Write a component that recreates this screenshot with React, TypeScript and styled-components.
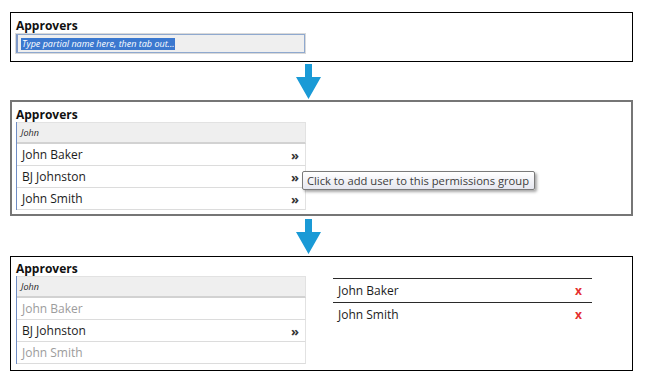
import React from 'react';
import styled, { createGlobalStyle } from 'styled-components';

const GlobalStyle = createGlobalStyle`
  body {
    margin: 0;
    background: #ffffff;
    font-family: "Open Sans", "Liberation Sans", sans-serif;
    color: #1c1c1c;
  }
`;

const Page = styled.div`
  width: 623px;
  padding: 12px 0 0 10px;
`;

const Panel = styled.section<{ $height: number; $border: string; $pad: string }>`
  position: relative;
  box-sizing: border-box;
  height: ${p => p.$height}px;
  border: ${p => p.$border};
  padding: ${p => p.$pad};
`;

const Heading = styled.h3`
  margin: 0;
  font-size: 12px;
  line-height: 14px;
  font-weight: 700;
  color: #111;
`;

const NameInput = styled.div`
  box-sizing: border-box;
  width: 289px;
  height: 19px;
  margin-top: 1px;
  display: flex;
  align-items: center;
  padding-left: 3px;
  background: #efefef;
  border: 1px solid #8fa9cf;
  border-left: 2px solid #7d98c8;
  box-shadow: 0 0 0 1px #d9d9d9;
`;

const Selection = styled.span`
  background: #3b78cf;
  color: #ffffff;
  font-style: italic;
  font-size: 9px;
  line-height: 12px;
  padding: 0 1px;
`;

const ArrowGap = styled.div<{ $height: number }>`
  height: ${p => p.$height}px;
  display: flex;
  align-items: center;
  padding-left: 286px;
`;

const Columns = styled.div`
  display: flex;
  align-items: flex-start;
`;

const Combo = styled.div`
  width: 289px;
  border-left: 1px solid #6f8cc4;
`;

const Filter = styled.div`
  box-sizing: border-box;
  height: 22px;
  display: flex;
  align-items: center;
  padding-left: 4px;
  background: #efefef;
  border-top: 1px solid #e2e2e2;
  border-right: 1px solid #e2e2e2;
  border-bottom: 2px solid #d2d2d2;
  font-size: 9px;
  font-style: italic;
  color: #222;
`;

const Option = styled.div<{ $muted?: boolean }>`
  box-sizing: border-box;
  height: 22px;
  display: flex;
  align-items: center;
  justify-content: space-between;
  padding: 0 6px 0 5px;
  border-right: 1px solid #e2e2e2;
  border-bottom: 1px solid #dcdcdc;
  font-size: 12px;
  color: ${p => (p.$muted ? '#9c9c9c' : '#1c1c1c')};
`;

const Chevron = styled.span`
  font-size: 13px;
  font-weight: 700;
  color: #333;
`;

const Tooltip = styled.div`
  position: absolute;
  left: 290px;
  top: 69px;
  box-sizing: border-box;
  height: 19px;
  padding: 0 5px 0 4px;
  display: flex;
  align-items: center;
  white-space: nowrap;
  font-size: 11.2px;
  color: #3c3c3c;
  background: linear-gradient(#ffffff, #e6e7f0);
  border: 1px solid #7a7a7a;
  border-radius: 2px;
  box-shadow: 2px 2px 3px rgba(0, 0, 0, 0.35);
`;

const Chosen = styled.ul`
  list-style: none;
  margin: 16px 0 0 27px;
  padding: 0;
  width: 259px;
`;

const ChosenItem = styled.li`
  box-sizing: border-box;
  height: 24px;
  display: flex;
  align-items: center;
  justify-content: space-between;
  padding: 0 10px 0 5px;
  border-top: 1px solid #2a2a2a;
  font-size: 12px;
  color: #1c1c1c;
`;

const Remove = styled.span`
  font-size: 12px;
  font-weight: 700;
  color: #e53030;
`;

function DownArrow() {
  return (
    <svg width="25" height="35" viewBox="0 0 25 35">
      <path d="M9 0H16V13H25L12.5 35L0 13H9Z" fill="#1a9ad6" />
    </svg>
  );
}

type Person = { name: string; muted?: boolean; add?: boolean };

function Picker({ people }: { people: Person[] }) {
  return (
    <Combo>
      <Filter>John</Filter>
      {people.map(p => (
        <Option key={p.name} $muted={p.muted}>
          {p.name}
          {p.add && <Chevron>»</Chevron>}
        </Option>
      ))}
    </Combo>
  );
}

export default function App() {
  return (
    <Page>
      <GlobalStyle />
      <Panel $height={50} $border="1px solid #000" $pad="6px 0 0 5px">
        <Heading>Approvers</Heading>
        <NameInput>
          <Selection>Type partial name here, then tab out...</Selection>
        </NameInput>
      </Panel>

      <ArrowGap $height={38}>
        <DownArrow />
      </ArrowGap>

      <Panel $height={116} $border="2px solid #767676" $pad="6px 0 0 4px">
        <Heading>Approvers</Heading>
        <Picker
          people={[
            { name: 'John Baker', add: true },
            { name: 'BJ Johnston', add: true },
            { name: 'John Smith', add: true },
          ]}
        />
        <Tooltip>Click to add user to this permissions group</Tooltip>
      </Panel>

      <ArrowGap $height={40}>
        <DownArrow />
      </ArrowGap>

      <Panel $height={115} $border="1px solid #000" $pad="5px 0 0 5px">
        <Columns>
          <div>
            <Heading>Approvers</Heading>
            <Picker
              people={[
                { name: 'John Baker', muted: true },
                { name: 'BJ Johnston', add: true },
                { name: 'John Smith', muted: true },
              ]}
            />
          </div>
          <Chosen>
            <ChosenItem>
              John Baker
              <Remove>x</Remove>
            </ChosenItem>
            <ChosenItem>
              John Smith
              <Remove>x</Remove>
            </ChosenItem>
          </Chosen>
        </Columns>
      </Panel>
    </Page>
  );
}
